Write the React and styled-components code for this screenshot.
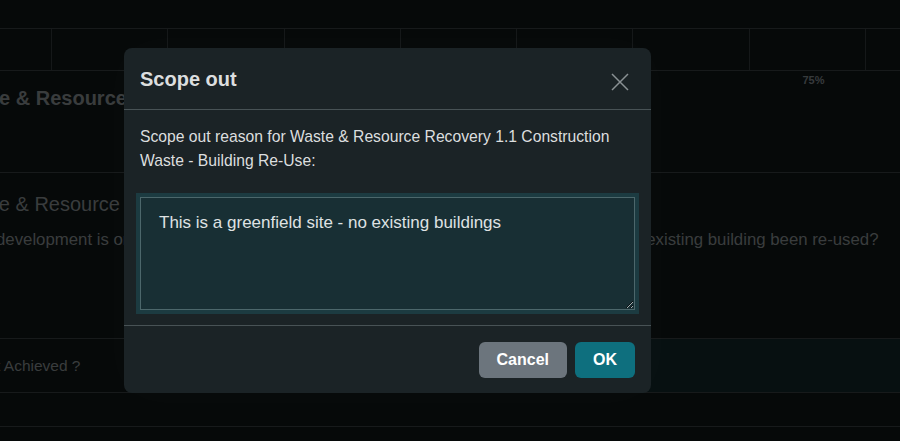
import React, { useEffect, useRef } from 'react';
import styled, { createGlobalStyle } from 'styled-components';

const GlobalStyle = createGlobalStyle`
  html, body {
    margin: 0;
    padding: 0;
    background: #0c1212;
    font-family: "Liberation Sans", Arial, sans-serif;
    overflow: hidden;
  }
`;

const Page = styled.div`
  position: relative;
  width: 900px;
  height: 441px;
  overflow: hidden;
  background: #0c1212;
  color: #767c7e;
  padding-top: 28px;
  box-sizing: border-box;
`;

const ScaleRow = styled.div`
  display: grid;
  grid-template-columns: 52px repeat(8, 116.3px);
  height: 43px;
  box-sizing: border-box;
  border-top: 1px solid #2f3537;
  border-bottom: 1px solid #2f3537;
`;

const ScaleCell = styled.div`
  border-right: 1px solid #2a3032;
`;

const ScaleLabels = styled.div`
  display: grid;
  grid-template-columns: 52px repeat(8, 116.3px);
  height: 16px;
  line-height: 18px;
  font-size: 11px;
  font-weight: 700;
`;

const ScaleLabel = styled.div`
  grid-column: ${(p) => p.$col};
  text-align: center;
  padding-left: 11px;
  color: #6c7479;
`;

const SectionTitle = styled.h2`
  margin: 0 -48px 0 -48px;
  font-size: 20px;
  line-height: 22px;
  font-weight: 700;
  white-space: nowrap;
  color: #73797b;
  padding-bottom: 63px;
  border-bottom: 1px solid #2f3537;
`;

const SubTitle = styled.h3`
  margin: 19px 0 0 -46px;
  font-size: 20px;
  line-height: 24px;
  font-weight: 400;
  white-space: nowrap;
  color: #73797b;
`;

const Question = styled.p`
  margin: 12px 0 0 -4px;
  font-size: 16.8px;
  line-height: 24px;
  white-space: nowrap;
  color: #73797b;
`;

const AnswerRow = styled.div`
  display: grid;
  grid-template-columns: 450px 1fr;
  margin-top: 86px;
  height: 55px;
  box-sizing: border-box;
  border-top: 1px solid #2f3537;
  border-bottom: 1px solid #2f3537;
`;

const AnswerLabel = styled.div`
  display: flex;
  align-items: center;
  margin-left: -41px;
  font-size: 15.5px;
  white-space: nowrap;
  color: #73797b;
`;

const AnswerField = styled.div`
  background: #0e2022;
`;

const EmptyRow = styled.div`
  height: 33px;
  border-bottom: 1px solid #2f3537;
`;

const Overlay = styled.div`
  position: absolute;
  inset: 0;
  background: rgba(0, 0, 0, 0.5);
  padding: 48px 0 0 124px;
  box-sizing: border-box;
`;

const Modal = styled.div`
  width: 527px;
  background: #1b2326;
  border-radius: 8px;
  box-shadow: 0 0 48px rgba(255, 255, 255, 0.025);
  color: #d6d8d9;
`;

const Header = styled.div`
  display: flex;
  align-items: flex-start;
  justify-content: space-between;
  padding: 16px 16px 15px;
  border-bottom: 1px solid #485255;
`;

const Title = styled.h5`
  margin: 0;
  font-size: 20px;
  line-height: 30px;
  font-weight: 700;
  color: #dcdedf;
`;

const CloseButton = styled.button`
  display: flex;
  align-items: center;
  justify-content: center;
  width: 28px;
  height: 24px;
  margin-top: 6px;
  margin-right: 1px;
  padding: 0;
  border: 0;
  background: transparent;
  cursor: pointer;
`;

const Body = styled.div`
  padding: 15px 16px 15px;
`;

const Prompt = styled.p`
  margin: 0 0 24px;
  font-size: 15.7px;
  line-height: 24px;
  color: #dcdedf;
`;

const Reason = styled.textarea`
  display: block;
  width: 100%;
  height: 113px;
  box-sizing: border-box;
  margin: 0;
  padding: 13px 18px;
  font-family: "Liberation Sans", Arial, sans-serif;
  font-size: 17px;
  line-height: 24px;
  color: #dfe2e3;
  background: #182f34;
  border: 1px solid #4c676b;
  border-radius: 0;
  resize: vertical;
  outline: none;
  box-shadow: 0 0 0 4px #1c3b41;
  caret-color: #e0e0e0;
`;

const Footer = styled.div`
  display: flex;
  justify-content: flex-end;
  gap: 8px;
  padding: 16px 16px 15px;
  border-top: 1px solid #485255;
`;

const Button = styled.button`
  height: 36px;
  padding: 0 18px;
  border: 0;
  border-radius: 6px;
  font-family: "Liberation Sans", Arial, sans-serif;
  font-size: 16px;
  font-weight: 700;
  color: #fff;
  background: ${(p) => (p.$primary ? '#0e6f7e' : '#6c757d')};
  cursor: pointer;
`;

const CloseIcon = () => (
  <svg width="18" height="18" viewBox="0 0 18 18" fill="none">
    <path d="M1 1 L17 17 M17 1 L1 17" stroke="#8a9194" strokeWidth="1.5" />
  </svg>
);

export default function App() {
  const ref = useRef(null);
  const text = 'This is a greenfield site - no existing buildings';

  useEffect(() => {
    const el = ref.current;
    if (el) {
      el.focus();
      el.setSelectionRange(text.length, text.length);
    }
  }, []);

  return (
    <>
      <GlobalStyle />
      <Page>
        <ScaleRow>
          {Array.from({ length: 9 }).map((_, i) => (
            <ScaleCell key={i} />
          ))}
        </ScaleRow>
        <ScaleLabels>
          <ScaleLabel $col={8}>75%</ScaleLabel>
        </ScaleLabels>
        <SectionTitle>Waste &amp; Resource Recovery</SectionTitle>
        <SubTitle>Waste &amp; Resource Recovery 1.1 Construction Waste - Building Re-Use</SubTitle>
        <Question>
          development is on a site that contains any existing buildings or other structures, has an existing building been re-used?
        </Question>
        <AnswerRow>
          <AnswerLabel>Credit Achieved ?</AnswerLabel>
          <AnswerField />
        </AnswerRow>
        <EmptyRow />

        <Overlay>
          <Modal>
            <Header>
              <Title>Scope out</Title>
              <CloseButton aria-label="Close">
                <CloseIcon />
              </CloseButton>
            </Header>
            <Body>
              <Prompt>
                Scope out reason for Waste &amp; Resource Recovery 1.1 Construction Waste - Building Re-Use:
              </Prompt>
              <Reason ref={ref} defaultValue={text} />
            </Body>
            <Footer>
              <Button>Cancel</Button>
              <Button $primary>OK</Button>
            </Footer>
          </Modal>
        </Overlay>
      </Page>
    </>
  );
}
